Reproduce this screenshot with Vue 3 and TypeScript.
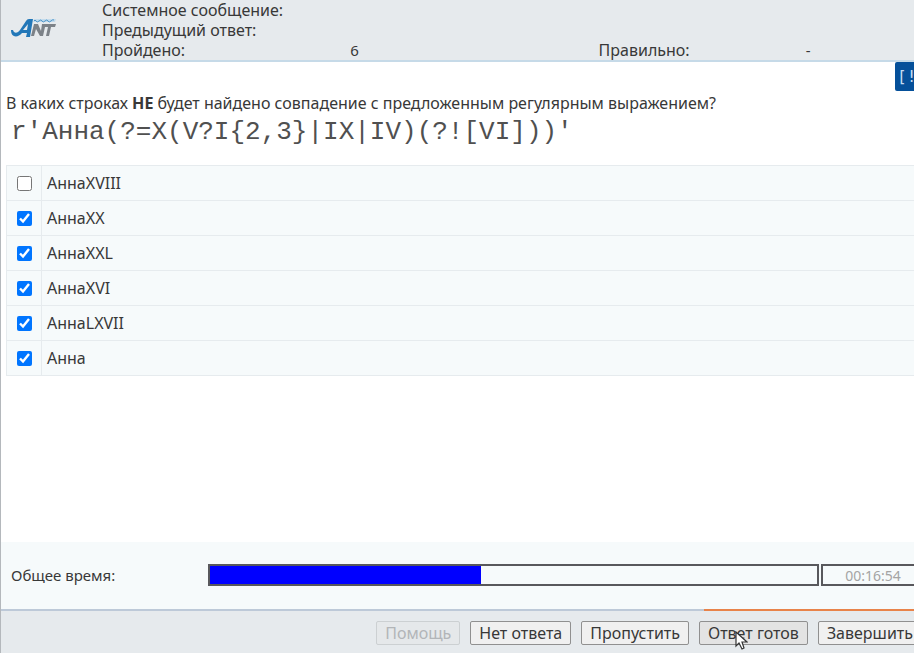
<script setup lang="ts">
import { ref } from 'vue'

interface Answer {
  id: string
  text: string
  checked: boolean
}

const answers = ref<Answer[]>([
  { id: 'a1', text: 'АннаXVIII', checked: false },
  { id: 'a2', text: 'АннаXX', checked: true },
  { id: 'a3', text: 'АннаXXL', checked: true },
  { id: 'a4', text: 'АннаXVI', checked: true },
  { id: 'a5', text: 'АннаLXVII', checked: true },
  { id: 'a6', text: 'Анна', checked: true },
])

const pattern = "r'Анна(?=X(V?I{2,3}|IX|IV)(?![VI]))'"
const passed = 6
const correct = '-'
const timeLeft = '00:16:54'
const progress = 44.6
</script>

<template>
  <div class="page">
    <header class="header">
      <svg class="logo" viewBox="0 0 48 22" role="img" aria-label="Academic ANT">
        <path d="M1 12 H3 C4 16 8 15 10 12 L16 3 Q17 1 19 1 H23 L20 19 H16 L17 15 H12 C8 20 1 20 1 12 Z M13 12 H17 L18 6 Z" fill="#2277b8" fill-rule="evenodd" />
        <path d="M24 1 H46 L45 4 H23 Z" fill="#c3dbec" />
        <path d="M24 3 q1 -2 2 0 t3 0 t3 0 t3 0 t3 0 t3 0 t3 -1" fill="none" stroke="#4c94c8" stroke-width="1" />
        <path d="M21 18 L24 6 H28 L31 13 L32 6 H46 L45 9 H41 L39 18 H36 L38 9 H35 L33 18 H30 L26 11 L24 18 Z" fill="#7c8288" />
      </svg>
      <dl class="status">
        <dt>Системное сообщение:</dt>
        <dd></dd>
        <dt>Предыдущий ответ:</dt>
        <dd></dd>
        <dt>Пройдено:</dt>
        <dd>{{ passed }}</dd>
        <dt>Правильно:</dt>
        <dd>{{ correct }}</dd>
      </dl>
    </header>

    <main class="main">
      <button class="badge" type="button">[!]</button>
      <p class="question">
        В каких строках <b>НЕ</b> будет найдено совпадение с предложенным регулярным выражением?
      </p>
      <code class="pattern">{{ pattern }}</code>
      <ul class="answers">
        <li v-for="a in answers" :key="a.id" class="answer">
          <span class="tick">
            <input :id="a.id" v-model="a.checked" class="box" type="checkbox" />
          </span>
          <label class="answer-text" :for="a.id">{{ a.text }}</label>
        </li>
      </ul>
    </main>

    <section class="timing">
      <span id="time-label" class="time-label">Общее время:</span>
      <div class="bar" role="progressbar" aria-labelledby="time-label" :aria-valuenow="progress">
        <div class="fill" :style="{ width: progress + '%' }"></div>
      </div>
      <span class="clock">{{ timeLeft }}</span>
    </section>

    <footer class="footer">
      <div class="accent"></div>
      <div class="actions">
        <button class="btn" type="button" disabled>Помощь</button>
        <button class="btn" type="button">Нет ответа</button>
        <button class="btn" type="button">Пропустить</button>
        <button class="btn active" type="button">
          Ответ готов
          <svg class="cursor" viewBox="0 0 13 20" aria-hidden="true">
            <path d="M1 1 V15 L4 12 L7 18 L9 17 L7 11 H12 Z" fill="#fff" stroke="#333" stroke-width="1.2" />
          </svg>
        </button>
        <button class="btn" type="button">Завершить</button>
      </div>
    </footer>
  </div>
</template>

<style>
body {
  overflow: hidden;
}
</style>

<style scoped>
.page {
  display: flex;
  flex-direction: column;
  box-sizing: border-box;
  min-height: 100vh;
  overflow: hidden;
  border-left: 1px solid #b4b8bc;
  background: #fff;
  color: #383838;
  font: 16px/20px "Noto Sans", sans-serif;
}

.header {
  display: flex;
  align-items: flex-start;
  border-bottom: 2px solid #c6dae8;
  background: #e6eaed;
}

.logo {
  width: 48px;
  height: 22px;
  margin: 18px 44px 0 9px;
}

.status {
  display: grid;
  flex: 1;
  grid-template-columns: 248fr 248fr 207fr 108fr;
  margin: 0;
}

.status dt:nth-of-type(-n + 2) + dd {
  grid-column: 2 / -1;
}

.status dd {
  margin: 0;
  font-size: 15px;
}

.main {
  position: relative;
  flex: 1;
  padding: 31px 0 0 5px;
}

.badge {
  position: absolute;
  top: 0;
  right: -31px;
  width: 50px;
  height: 29px;
  padding: 0 0 0 2px;
  border: 0;
  border-radius: 2px;
  background: #05509a;
  color: #c4dcf2;
  font: 16px/20px "DejaVu Sans Mono", monospace;
  text-align: left;
}

.question {
  margin: 0;
  white-space: nowrap;
}

.pattern {
  display: block;
  padding: 0 0 0 5px;
  color: #505050;
  font: 26px/38px "Liberation Mono", monospace;
  white-space: nowrap;
}

.answers {
  margin: 14px 0 0;
  padding: 0;
  border: 1px solid #e6ebee;
  border-width: 1px 0 0 1px;
  background: #f6fafb;
  list-style: none;
}

.answer {
  display: flex;
  border-bottom: 1px solid #e6ebee;
}

.tick {
  display: flex;
  align-items: center;
  justify-content: center;
  width: 34px;
  border-right: 1px solid #e6ebee;
}

.box {
  width: 15px;
  height: 15px;
  margin: 0;
}

.answer-text {
  flex: 1;
  padding: 7px 5px;
}

.timing {
  display: grid;
  grid-template-columns: 195px 1fr 104px;
  column-gap: 2px;
  align-items: center;
  margin-right: -11px;
  padding: 22px 0 23px 10px;
  background: #f6fafb;
}

.time-label {
  font-size: 15px;
}

.bar,
.clock {
  box-sizing: border-box;
  height: 22px;
  border: 2px solid #58585c;
}

.fill {
  height: 100%;
  background: #00f;
}

.clock {
  color: #a4a4a4;
  font-size: 14px;
  line-height: 20px;
  text-align: center;
}

.footer {
  border-top: 2px solid #bdc9d8;
  background: #e6eaed;
}

.accent {
  width: 23%;
  height: 2px;
  margin: -2px 0 0 auto;
  background: #e8834a;
}

.actions {
  display: flex;
  justify-content: flex-end;
  gap: 10px;
  margin-right: -8px;
  padding: 10px 0 8px;
}

.btn {
  position: relative;
  height: 24px;
  padding: 0 8px;
  border: 1px solid #909090;
  border-radius: 2px;
  background: #f0f0f0;
  color: #383838;
  font: 16px/20px "Noto Sans", sans-serif;
  white-space: nowrap;
}

.btn:disabled {
  border-color: #ccd0d2;
  background: #e5e8ea;
  color: #b2b5b8;
}

.active {
  background: #e3e3e3;
}

.cursor {
  position: absolute;
  top: 9px;
  left: 35px;
  width: 13px;
  height: 20px;
}
</style>
